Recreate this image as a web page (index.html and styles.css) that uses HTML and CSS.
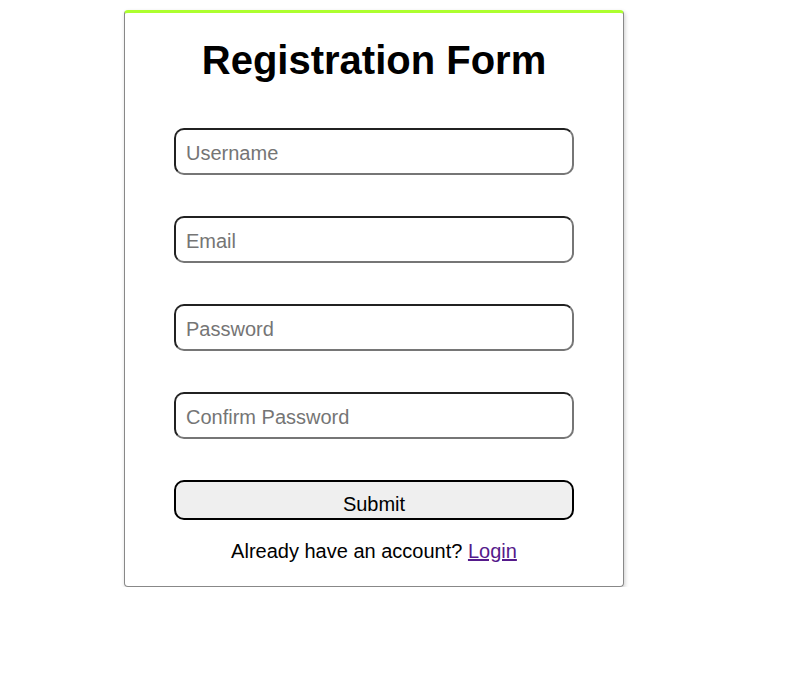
FILE: index.html
```html
<!DOCTYPE html>
<html>
<head>
<meta charset="utf-8">
<link rel="stylesheet" href="styles.css">
</head>
<body>
<div class="page">
  <div class="card">
    <h1 class="title">Registration Form</h1>
    <form class="form">
      <input class="field" type="text" placeholder="Username">
      <input class="field" type="email" placeholder="Email">
      <input class="field" type="password" placeholder="Password">
      <input class="field" type="password" placeholder="Confirm Password">
      <button class="submit" type="button">Submit</button>
    </form>
    <p class="note">Already have an account? <a class="link" href="#">Login</a></p>
  </div>
</div>
</body>
</html>
```

FILE: styles.css
```css
html, body {
  margin: 0;
  background: #fff;
}
body {
  font-family: "Liberation Sans", Arial, sans-serif;
  font-size: 20px;
  color: #000;
}
.page {
  padding: 10px 0 0 124px;
}
.card {
  box-sizing: border-box;
  width: 500px;
  border: 1px solid #888;
  border-top: 3px solid #adff2f;
  border-radius: 4px;
  box-shadow: 1px 2px 4px rgba(0, 0, 0, 0.2);
  text-align: center;
  padding-bottom: 5px;
}
.title {
  font-size: 40px;
  font-weight: bold;
  line-height: 45px;
  margin: 25px 0 27px;
}
.form {
  display: flex;
  flex-direction: column;
  align-items: center;
  gap: 41px;
  padding-top: 18px;
}
.field {
  box-sizing: border-box;
  width: 400px;
  height: 47px;
  font-family: "Liberation Sans", Arial, sans-serif;
  font-size: 20px;
  padding: 3px 10px 0;
  border: 2px inset rgb(118, 118, 118);
  border-radius: 10px;
  outline: none;
}
.field::placeholder {
  color: #757575;
}
.submit {
  box-sizing: border-box;
  width: 400px;
  height: 40px;
  font-family: "Liberation Sans", Arial, sans-serif;
  font-size: 20px;
  padding: 8px 6px 0;
  background: #efefef;
  border: 2px solid #000;
  border-radius: 10px;
  color: #000;
}
.note {
  margin: 20px 0 18px;
}
.link {
  color: #551a8b;
}
```
